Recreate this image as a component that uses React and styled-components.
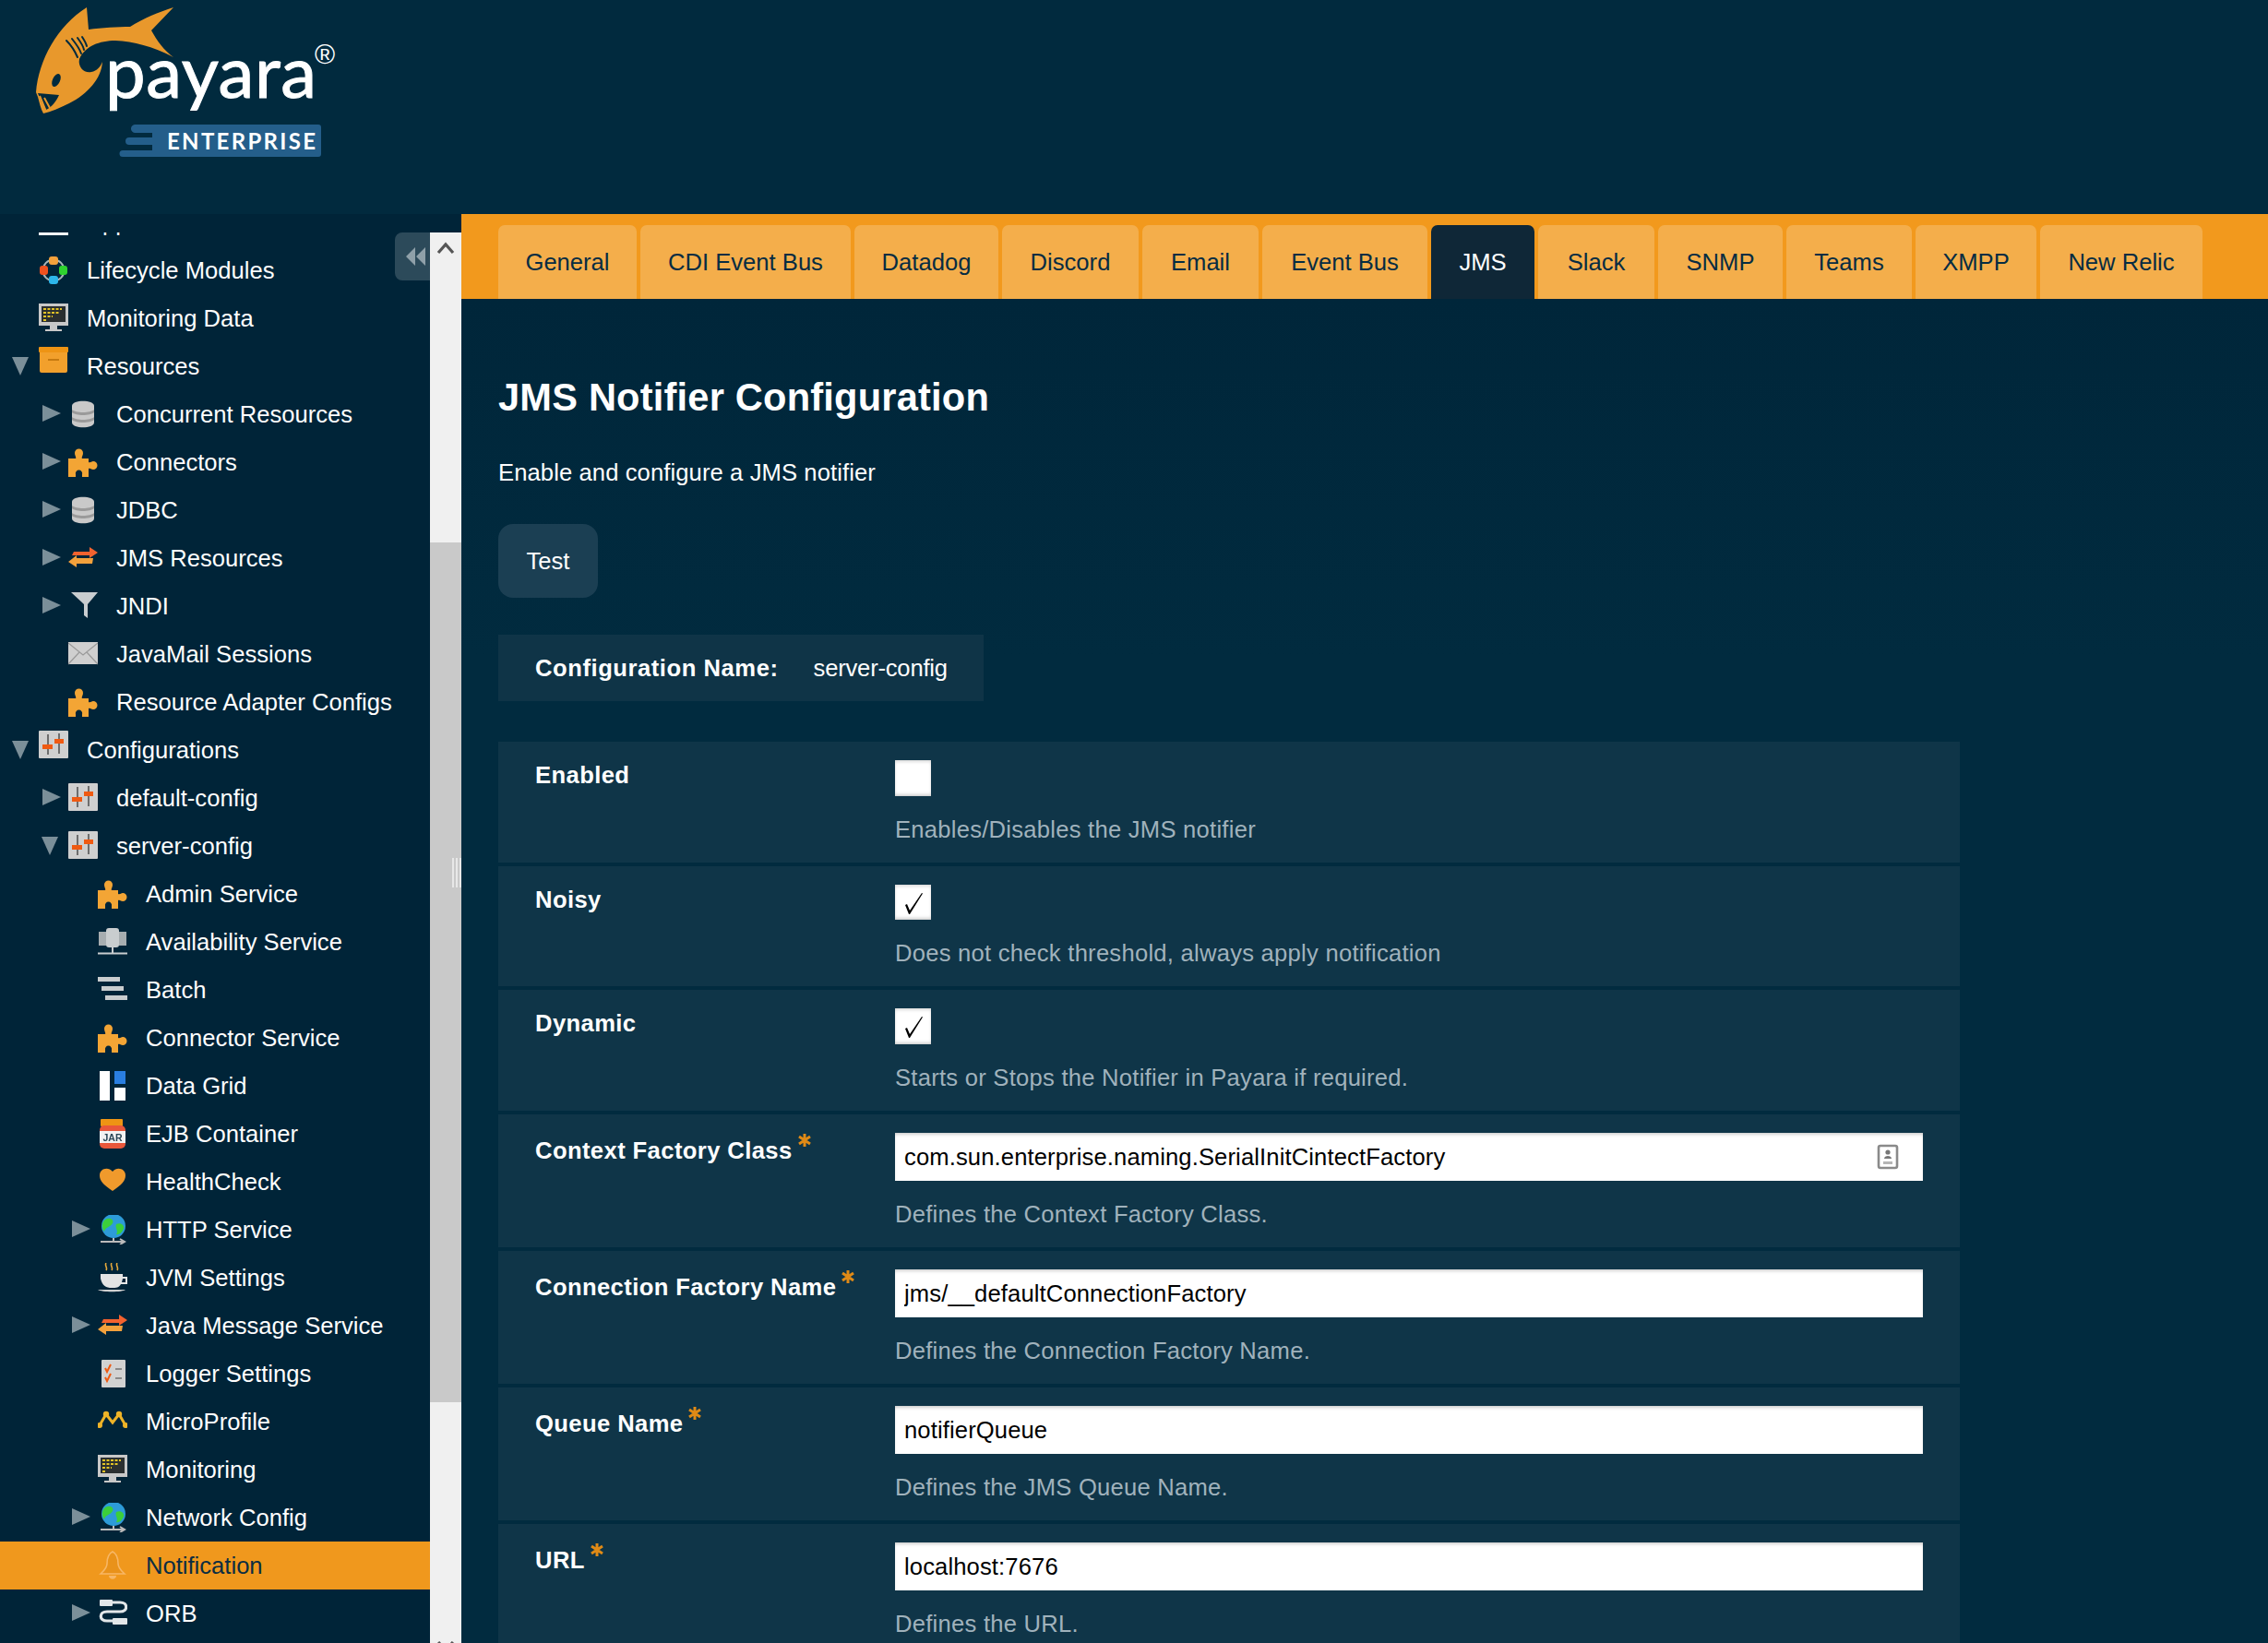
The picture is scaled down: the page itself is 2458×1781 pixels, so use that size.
import React from "react";
import styled, { createGlobalStyle } from "styled-components";

const GlobalStyle = createGlobalStyle`
  html, body {
    margin: 0;
    padding: 0;
    background: #012a3e;
  }
  * {
    box-sizing: border-box;
  }
`;

const Page = styled.div`
  width: 100%;
  height: 100vh;
  display: flex;
  flex-direction: column;
  overflow: hidden;
  font-family: "Liberation Sans", Arial, sans-serif;
  font-size: 25.6px;
  color: #fff;
`;

const Header = styled.header`
  height: 232px;
  flex: none;
  background: #012a3e;
`;

const Body = styled.div`
  flex: 1;
  min-height: 0;
  display: flex;
`;

/* ---------- sidebar ---------- */

const Sidebar = styled.aside`
  position: relative;
  width: 500px;
  flex: none;
  display: flex;
  padding-top: 20px;
  background: #002438;
`;

const TreeViewport = styled.nav`
  width: 466px;
  flex: none;
  overflow: hidden;
`;

const TreeList = styled.div`
  margin-top: -37px;
`;

const TreeRow = styled.div`
  height: 52px;
  display: flex;
  align-items: center;
  padding-left: ${(p) => 10 + p.$level * 32}px;
  background: ${(p) => (p.$active ? "#f0981d" : "transparent")};
  color: ${(p) => (p.$active ? "#0a2d42" : "#fff")};
  white-space: nowrap;
`;

const ArrowSlot = styled.span`
  width: 32px;
  height: 20px;
  flex: none;
  display: flex;
  justify-content: center;
  padding-right: ${(p) => (p.$open ? 8 : 4)}px;
`;

const TreeIcon = styled.svg`
  width: 32px;
  height: 32px;
  flex: none;
  margin-top: ${(p) => (p.$lift ? -10 : 0)}px;
  filter: blur(0.35px);
`;

const TreeLabel = styled.span`
  margin-left: 20px;
`;

const CollapseButton = styled.button`
  position: absolute;
  top: 20px;
  left: 428px;
  width: 52px;
  height: 52px;
  padding: 0 0 0 12px;
  display: flex;
  align-items: center;
  border: none;
  border-radius: 8px;
  background: #2c4a5a;
`;

const ScrollTrack = styled.div`
  position: relative;
  width: 34px;
  flex: none;
  overflow: hidden;
  background: #f0f0f0;
  display: flex;
  flex-direction: column;
  align-items: center;
`;

const ScrollThumb = styled.div`
  width: 34px;
  height: 932px;
  flex: none;
  margin-top: 312px;
  background: #c9c9c9;
`;

const ScrollChevron = styled.svg`
  width: 20px;
  height: 16px;
  flex: none;
  margin-top: ${(p) => p.$top}px;
`;

const Grip = styled.div`
  position: absolute;
  top: 698px;
  right: 0;
  width: 10px;
  height: 32px;
  border-left: 2px solid #e8e8e8;
  border-right: 2px solid #e8e8e8;
  background: linear-gradient(90deg, transparent 40%, #e8e8e8 40%, #e8e8e8 60%, transparent 60%);
`;

/* ---------- main ---------- */

const Main = styled.main`
  flex: 1;
  min-width: 0;
  background: linear-gradient(#00263a 92px, #012b3f 480px);
`;

const TabBar = styled.div`
  height: 92px;
  display: flex;
  align-items: flex-end;
  gap: 4px;
  padding-left: 40px;
  background: #f2991d;
`;

const Tab = styled.div`
  width: ${(p) => p.$width}px;
  height: 80px;
  display: flex;
  align-items: center;
  justify-content: center;
  border-radius: 7px 7px 0 0;
  background: ${(p) => (p.$active ? "#0f2737" : "#f4ae4b")};
  color: ${(p) => (p.$active ? "#fff" : "#062c42")};
`;

const Content = styled.div`
  padding: 0 40px;
  width: 1664px;
`;

const Title = styled.h1`
  margin: 79px 0 0;
  font-size: 41.6px;
  line-height: 56px;
  font-weight: 700;
  letter-spacing: 0.2px;
`;

const Intro = styled.p`
  margin: 35px 0 0;
  line-height: 36px;
  letter-spacing: 0.1px;
`;

const TestButton = styled.button`
  display: block;
  width: 108px;
  height: 80px;
  margin-top: 38px;
  padding: 0;
  border: none;
  border-radius: 16px;
  background: #1b3f53;
  color: #fff;
  font: inherit;
`;

const NameBox = styled.div`
  display: flex;
  align-items: center;
  width: 526px;
  height: 72px;
  margin-top: 40px;
  padding: 0 40px;
  background: #0f3447;
  white-space: nowrap;
`;

const NameLabel = styled.span`
  font-weight: 700;
  letter-spacing: 0.55px;
`;

const NameValue = styled.span`
  margin-left: 38px;
  letter-spacing: -0.2px;
`;

const Form = styled.div`
  display: flex;
  flex-direction: column;
  gap: 4px;
  margin-top: 44px;
`;

const FormRow = styled.div`
  display: grid;
  grid-template-columns: 390px 1fr;
  padding: 20px 40px 18px;
  background: #0f3548;
`;

const FieldLabel = styled.label`
  display: block;
  margin-top: ${(p) => (p.$required ? 1 : -2)}px;
  font-weight: 700;
  letter-spacing: 0.4px;
  line-height: 36px;
`;

const RequiredMark = styled.svg`
  width: 14px;
  height: 14px;
  margin-left: 6px;
  vertical-align: 13px;
`;

const FieldValue = styled.div`
  min-width: 0;
`;

const CheckBox = styled.div`
  width: 39px;
  height: 38.67px;
  background: #fff;
  box-shadow: inset 0 -3px 4px -2px #bbb, inset 0 3px 4px -2px #ccc;
`;

const InputWrap = styled.div`
  position: relative;
`;

const TextInput = styled.input`
  display: block;
  width: 100%;
  height: 52px;
  padding: 2px 10px 0;
  border: none;
  outline: none;
  background: #fff;
  color: #000;
  font: inherit;
  letter-spacing: 0.12px;
  box-shadow: inset 0 3px 4px -2px #bbb;
`;

const AutofillIcon = styled.svg`
  position: absolute;
  top: 12px;
  right: 26px;
  width: 24px;
  height: 28px;
`;

const HelpText = styled.div`
  margin-top: 18px;
  line-height: 36px;
  color: #a0b2bc;
  letter-spacing: 0.25px;
`;

/* ---------- drawings ---------- */

const Fish = () => (
  <g>
    <path
      fill="#e8982c"
      d="M39 100 C42 65 62 28 94 8 L96 32 C110 30 128 29 141 29 C155 20 172 13 188 8 L164 33 C170 44 178 55 188 62 C165 50 145 45 125 44 C108 44 92 50 86 64 C84 73 92 80 99 78 C105 77 109 72 111 67 C110 85 95 102 75 112 C65 117 55 121 47 123 C44 118 43 112 41 105 Z"
    />
    <path fill="#012a3e" d="M41 101 L64 103 C61 110 56 116 50 119 L45 111 Z" />
    <path stroke="#e8982c" strokeWidth="2" fill="none" d="M43 104 L50 121 M48 106 L54 117" />
    <ellipse cx="61" cy="87" rx="4" ry="7.5" fill="#012a3e" transform="rotate(25 61 87)" />
    <path
      stroke="#012a3e"
      strokeWidth="2"
      strokeLinecap="round"
      fill="none"
      d="M72 44 C77 49 81 55 84 62 M78 42 C82 47 86 52 88 58 M84 41 C87 45 90 49 91 54 M89 40 C91 43 93 46 94 50"
    />
  </g>
);

const Logo = () => (
  <svg width="372" height="180" viewBox="0 0 372 180">
    <Fish />
    <text x="114" y="106" fontFamily="Lato, sans-serif" fontSize="78" fill="#fff" stroke="#fff" strokeWidth="1" textLength="229" lengthAdjust="spacing">
      payara
    </text>
    <text x="341" y="69" fontFamily="Liberation Sans, sans-serif" fontSize="30" fill="#fff">
      ®
    </text>
    <path fill="#245e8a" d="M147 135 H345 a3 3 0 0 1 3 3 V167 a3 3 0 0 1 -3 3 H133 a3 3 0 0 1 0 -7 H165 V157 H140 a4 4 0 0 1 0 -8 H165 V144 H146 a4 4 0 0 1 1 -9 Z" />
    <text x="181" y="162" fontFamily="Lato, sans-serif" fontWeight="700" fontSize="24" fill="#fff" textLength="161" lengthAdjust="spacing">
      ENTERPRISE
    </text>
  </svg>
);

const sliders = (
  <>
    <rect width="32" height="30" rx="1" fill="#cfcfcf" />
    <path stroke="#555" strokeWidth="1.6" d="M10 4 V26 M22 3 V25" />
    <rect x="4" y="15" width="11" height="5" fill="#ef5a12" />
    <rect x="17" y="9" width="10" height="5" fill="#ef5a12" />
  </>
);

const puzzle = (
  <path
    fill="#f3a535"
    fillRule="evenodd"
    d="M0 12 H8 C9 11 7 9 7 6 A4.5 4.5 0 0 1 16 6 C16 9 14 11 15 12 H22 V16 C24 17 25 15 27 15 A4.5 4.5 0 0 1 27 24 C25 24 24 22 22 23 V32 H15 V29 A3.6 3.6 0 1 0 8 29 V32 H0 Z"
  />
);

const database = (
  <>
    <path fill="#c9c9c9" d="M4 7 C4 0 28 0 28 7 V25 C28 32 4 32 4 25 Z" />
    <path fill="#9a9a9a" d="M4 11 C8 15 24 15 28 11 V14 C24 18 8 18 4 14 Z M4 19 C8 23 24 23 28 19 V22 C24 26 8 26 4 22 Z" />
  </>
);

const swapArrows = (
  <>
    <path fill="#f3622f" d="M6 9 H23 V4 L32 10 L23 16 V13 H4 Z" />
    <path fill="#f3a13c" d="M27 16 H9 V13 L0 20 L9 26 V22 H26 Z" />
  </>
);

const monitor = (
  <>
    <rect y="0" width="32" height="24" fill="#c8c8c8" />
    <rect x="3" y="3" width="26" height="17" fill="#2b2f30" />
    <path stroke="#e3c326" strokeWidth="2" strokeDasharray="3 1.5" d="M5 6 H25 M5 10 H22 M5 14 H15 M5 18 H9" />
    <path fill="#c8c8c8" d="M12 24 H20 V28 H25 V30 H7 V28 H12 Z" />
  </>
);

const globe = (
  <>
    <circle cx="17" cy="12" r="13" fill="#2d9bd8" />
    <path fill="#3ccf3a" d="M8 5 C13 2 18 5 16 9 C14 13 8 13 7 18 C4 14 4 8 8 5 Z M20 10 C25 8 29 11 28 15 C26 20 22 22 20 21 C23 17 18 14 20 10 Z" />
    <path stroke="#bbb" strokeWidth="2" fill="none" d="M3 29 H28 M24 26 L29 29 L24 32 M17 25 V29" />
  </>
);

const icons = {
  apps: <rect x="0" y="27" width="32" height="3" fill="#fff" />,
  lifecycle: (
    <>
      <circle cx="16" cy="16" r="11.5" fill="none" stroke="#a9b4b8" strokeWidth="2" />
      <rect x="11" y="1" width="10" height="9" rx="3" fill="#f3a13c" />
      <rect x="1" y="11" width="9" height="10" rx="3" fill="#f0511f" />
      <rect x="22" y="11" width="9" height="10" rx="3" fill="#2fd32f" />
      <rect x="11" y="22" width="10" height="9" rx="3" fill="#2db6ea" />
    </>
  ),
  monitor,
  box: (
    <>
      <rect x="1" y="4" width="30" height="24" rx="2" fill="#f2a02c" />
      <rect x="0" y="0" width="32" height="6" rx="1" fill="#ee9414" />
      <rect x="10" y="13" width="12" height="2" fill="#c67a10" />
    </>
  ),
  database,
  puzzle,
  swapArrows,
  funnel: <path fill="#c9cdd0" d="M3 1 H32 L21 14 V29 L17 26 V14 Z" />,
  mail: (
    <>
      <rect y="3" width="32" height="24" fill="#cfcfcf" />
      <path stroke="#999" strokeWidth="1.2" fill="none" d="M0 4 L16 17 L32 4 M0 27 L12 14 M32 27 L20 14" />
    </>
  ),
  sliders,
  servers: (
    <>
      <rect x="1" y="5" width="8" height="15" fill="#a7adb0" />
      <rect x="23" y="5" width="8" height="15" fill="#a7adb0" />
      <rect x="9" y="1" width="14" height="21" rx="3" fill="#c9cdcf" />
      <path stroke="#c9cdcf" strokeWidth="2" d="M16 22 V28 M0 28.5 H32" />
    </>
  ),
  batch: (
    <path fill="#c9cdcf" d="M0 2 H24 V7 H0 Z M4 12 H28 V17 H4 Z M8 22 H32 V27 H8 Z" />
  ),
  grid: (
    <>
      <rect x="2" y="0" width="11" height="32" fill="#fff" />
      <rect x="18" y="0" width="12" height="14" fill="#2a7ee0" />
      <rect x="18" y="18" width="12" height="14" fill="#fff" />
    </>
  ),
  jar: (
    <>
      <rect x="3" y="0" width="24" height="8" rx="1" fill="#ee9414" />
      <rect x="2" y="7" width="28" height="25" rx="5" fill="#e9573b" />
      <rect x="2" y="13" width="28" height="13" fill="#f2f2f2" />
      <text x="16" y="24" textAnchor="middle" fontFamily="Liberation Sans, sans-serif" fontWeight="700" fontSize="10.5" fill="#2a4656">
        JAR
      </text>
    </>
  ),
  heart: <path fill="#f09a2c" d="M16 26 C6 19 2 15 2 9 C2 2 11 -1 16 5 C21 -1 30 2 30 9 C30 15 26 19 16 26 Z" />,
  globe,
  cup: (
    <>
      <path stroke="#e4a93c" strokeWidth="1.6" fill="none" d="M9 0 C7 3 11 5 9 8 M15 0 C13 3 17 5 15 8 M21 0 C19 3 23 5 21 8" />
      <path fill="#e4e4e4" d="M3 12 H27 V15 H32 V23 H25 C23 27 20 27 15 27 C9 27 5 25 3 17 Z" />
      <path fill="#012438" d="M27 17 H30 V21 H26 Z" />
      <path fill="#cfcfcf" d="M0 29 H30 C27 32 4 32 0 29 Z" />
    </>
  ),
  logger: (
    <>
      <rect x="4" y="1" width="26" height="30" rx="1" fill="#d2d2d2" />
      <path stroke="#ef5a12" strokeWidth="2" fill="none" d="M8 10 L10 14 L14 6 M8 20 L10 24 L14 16" />
      <path stroke="#8a8a8a" strokeWidth="2" d="M19 11 H26 M19 21 H26" />
    </>
  ),
  micro: (
    <>
      <path stroke="#eeb327" strokeWidth="3" fill="none" d="M2 20 L9 8 L16 17 L23 8 L30 20" />
      <circle cx="2" cy="20" r="3" fill="#eeb327" />
      <circle cx="9" cy="8" r="3.2" fill="#eeb327" />
      <circle cx="23" cy="8" r="3.2" fill="#eeb327" />
      <circle cx="30" cy="20" r="3" fill="#eeb327" />
    </>
  ),
  bell: (
    <>
      <path fill="#e9921a" stroke="#f7b766" strokeWidth="1.6" d="M16 1 C20 3 22 8 22 14 C22 19 26 22 29 25 H3 C6 22 10 19 10 14 C10 8 12 3 16 1 Z" />
      <path fill="#f7b766" d="M12 27 H20 C20 32 12 32 12 27 Z" />
    </>
  ),
  cable: (
    <>
      <path stroke="#e2e6e8" strokeWidth="3.2" fill="none" d="M14 4 H24 C33 4 33 14 24 14 H10 C1 14 1 24 10 24 H20" />
      <rect x="2" y="1" width="14" height="7" rx="1" fill="#e2e6e8" />
      <rect x="16" y="21" width="16" height="7" rx="1" fill="#e2e6e8" />
    </>
  ),
};

const Arrow = ({ open }) =>
  open ? (
    <svg width="18" height="20" viewBox="0 0 18 20">
      <path fill="#7b8f99" d="M0 0 H18 L9 20 Z" />
    </svg>
  ) : (
    <svg width="20" height="18" viewBox="0 0 20 18">
      <path fill="#7b8f99" d="M0 0 L20 9 L0 18 Z" />
    </svg>
  );

const tree = [
  { level: 0, icon: "apps", label: "Applications" },
  { level: 0, icon: "lifecycle", label: "Lifecycle Modules" },
  { level: 0, icon: "monitor", label: "Monitoring Data" },
  { level: 0, icon: "box", label: "Resources", arrow: "open", lift: true },
  { level: 1, icon: "database", label: "Concurrent Resources", arrow: "closed" },
  { level: 1, icon: "puzzle", label: "Connectors", arrow: "closed" },
  { level: 1, icon: "database", label: "JDBC", arrow: "closed" },
  { level: 1, icon: "swapArrows", label: "JMS Resources", arrow: "closed" },
  { level: 1, icon: "funnel", label: "JNDI", arrow: "closed" },
  { level: 1, icon: "mail", label: "JavaMail Sessions" },
  { level: 1, icon: "puzzle", label: "Resource Adapter Configs" },
  { level: 0, icon: "sliders", label: "Configurations", arrow: "open", lift: true },
  { level: 1, icon: "sliders", label: "default-config", arrow: "closed" },
  { level: 1, icon: "sliders", label: "server-config", arrow: "open" },
  { level: 2, icon: "puzzle", label: "Admin Service" },
  { level: 2, icon: "servers", label: "Availability Service" },
  { level: 2, icon: "batch", label: "Batch" },
  { level: 2, icon: "puzzle", label: "Connector Service" },
  { level: 2, icon: "grid", label: "Data Grid" },
  { level: 2, icon: "jar", label: "EJB Container" },
  { level: 2, icon: "heart", label: "HealthCheck" },
  { level: 2, icon: "globe", label: "HTTP Service", arrow: "closed" },
  { level: 2, icon: "cup", label: "JVM Settings" },
  { level: 2, icon: "swapArrows", label: "Java Message Service", arrow: "closed" },
  { level: 2, icon: "logger", label: "Logger Settings" },
  { level: 2, icon: "micro", label: "MicroProfile" },
  { level: 2, icon: "monitor", label: "Monitoring" },
  { level: 2, icon: "globe", label: "Network Config", arrow: "closed" },
  { level: 2, icon: "bell", label: "Notification", active: true },
  { level: 2, icon: "cable", label: "ORB", arrow: "closed" },
];

const tabs = [
  { label: "General", width: 150 },
  { label: "CDI Event Bus", width: 228 },
  { label: "Datadog", width: 156 },
  { label: "Discord", width: 148 },
  { label: "Email", width: 126 },
  { label: "Event Bus", width: 179 },
  { label: "JMS", width: 112 },
  { label: "Slack", width: 126 },
  { label: "SNMP", width: 135 },
  { label: "Teams", width: 136 },
  { label: "XMPP", width: 131 },
  { label: "New Relic", width: 176 },
];

const fields = [
  { label: "Enabled", type: "check", checked: false, help: "Enables/Disables the JMS notifier" },
  { label: "Noisy", type: "check", checked: true, help: "Does not check threshold, always apply notification" },
  { label: "Dynamic", type: "check", checked: true, help: "Starts or Stops the Notifier in Payara if required." },
  {
    label: "Context Factory Class",
    value: "com.sun.enterprise.naming.SerialInitCintectFactory",
    help: "Defines the Context Factory Class.",
    autofill: true,
  },
  { label: "Connection Factory Name", value: "jms/__defaultConnectionFactory", help: "Defines the Connection Factory Name." },
  { label: "Queue Name", value: "notifierQueue", help: "Defines the JMS Queue Name." },
  { label: "URL", value: "localhost:7676", help: "Defines the URL." },
];

const Field = ({ field }) => {
  const required = field.type !== "check";
  return (
    <FormRow>
      <FieldLabel $required={required}>
        {field.label}
        {required && (
          <RequiredMark viewBox="0 0 14 14">
            <path stroke="#e08a16" strokeWidth="3" d="M7 0 V14 M1 3 L13 11 M13 3 L1 11" />
          </RequiredMark>
        )}
      </FieldLabel>
      <FieldValue>
        {field.type === "check" ? (
          <CheckBox>
            {field.checked && (
              <svg width="39" height="39" viewBox="0 0 39 39">
                <path d="M11 22 L13 21 L16 28 L29 9 L30 9.5 L16 32 L15 32 Z" fill="#000" />
              </svg>
            )}
          </CheckBox>
        ) : (
          <InputWrap>
            <TextInput readOnly value={field.value} />
            {field.autofill && (
              <AutofillIcon viewBox="0 0 24 28">
                <rect x="2" y="2" width="20" height="24" rx="2" fill="none" stroke="#8a8a8a" strokeWidth="2.6" />
                <circle cx="12" cy="9" r="2.6" fill="#777" />
                <path fill="#777" d="M8 16 C8 12 16 12 16 16 Z" />
                <rect x="7" y="19" width="10" height="3" fill="#b5b5b5" />
              </AutofillIcon>
            )}
          </InputWrap>
        )}
        <HelpText>{field.help}</HelpText>
      </FieldValue>
    </FormRow>
  );
};

export default function App() {
  return (
    <Page>
      <GlobalStyle />
      <Header>
        <Logo />
      </Header>
      <Body>
        <Sidebar>
          <TreeViewport>
            <TreeList>
              {tree.map((item) => (
                <TreeRow key={item.label} $level={item.level} $active={item.active}>
                  <ArrowSlot $open={item.arrow === "open"}>
                    {item.arrow && <Arrow open={item.arrow === "open"} />}
                  </ArrowSlot>
                  <TreeIcon viewBox="0 0 32 32" $lift={item.lift}>
                    {icons[item.icon]}
                  </TreeIcon>
                  <TreeLabel>{item.label}</TreeLabel>
                </TreeRow>
              ))}
            </TreeList>
          </TreeViewport>
          <CollapseButton aria-label="Collapse">
            <svg width="22" height="20" viewBox="0 0 22 20">
              <path fill="#8fa0a9" d="M10 0 V20 L0 10 Z M21 0 V20 L11 10 Z" />
            </svg>
          </CollapseButton>
          <ScrollTrack>
            <ScrollChevron viewBox="0 0 20 16" $top={8}>
              <path fill="none" stroke="#555" strokeWidth="3.2" d="M2 14 L10 5 L18 14" />
            </ScrollChevron>
            <ScrollThumb />
            <ScrollChevron viewBox="0 0 20 16" $top={259}>
              <path fill="none" stroke="#555" strokeWidth="3.2" d="M2 1 L10 10 L18 1" />
            </ScrollChevron>
          </ScrollTrack>
          <Grip />
        </Sidebar>
        <Main>
          <TabBar>
            {tabs.map((tab) => (
              <Tab key={tab.label} $width={tab.width} $active={tab.label === "JMS"}>
                {tab.label}
              </Tab>
            ))}
          </TabBar>
          <Content>
            <Title>JMS Notifier Configuration</Title>
            <Intro>Enable and configure a JMS notifier</Intro>
            <TestButton>Test</TestButton>
            <NameBox>
              <NameLabel>Configuration Name:</NameLabel>
              <NameValue>server-config</NameValue>
            </NameBox>
            <Form>
              {fields.map((field) => (
                <Field key={field.label} field={field} />
              ))}
            </Form>
          </Content>
        </Main>
      </Body>
    </Page>
  );
}
